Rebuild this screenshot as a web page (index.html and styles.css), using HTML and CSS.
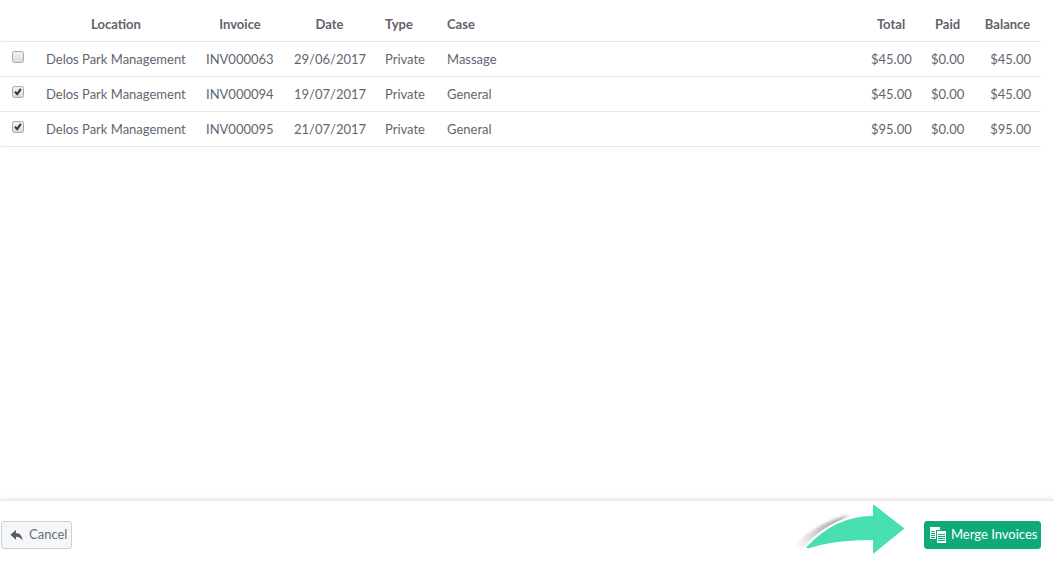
FILE: index.html
```html
<!DOCTYPE html>
<html lang="en">
<head>
<meta charset="utf-8">
<title>Merge Invoices</title>
<link rel="stylesheet" href="styles.css">
</head>
<body>
<div class="page">
  <main class="content">
    <table class="invoices">
      <colgroup>
        <col class="c-check"><col class="c-loc"><col class="c-inv"><col class="c-date"><col class="c-type"><col class="c-case"><col class="c-total"><col class="c-paid"><col class="c-bal">
      </colgroup>
      <thead>
        <tr>
          <th></th><th class="mid">Location</th><th class="mid">Invoice</th><th class="mid">Date</th><th>Type</th><th>Case</th><th class="mid">Total</th><th class="mid">Paid</th><th class="mid">Balance</th>
        </tr>
      </thead>
      <tbody>
        <tr>
          <td class="chk"><span class="box"></span></td><td>Delos Park Management</td><td>INV000063</td><td>29/06/2017</td><td>Private</td><td>Massage</td><td class="num">$45.00</td><td class="num">$0.00</td><td class="num">$45.00</td>
        </tr>
        <tr>
          <td class="chk"><span class="box"><svg class="tick" viewBox="0 0 12 12"><path d="M1.500 6.400l1.900-1.700 1.500 2 3.500-5.200 2 1.400-5.300 7.600z"/></svg></span></td><td>Delos Park Management</td><td>INV000094</td><td>19/07/2017</td><td>Private</td><td>General</td><td class="num">$45.00</td><td class="num">$0.00</td><td class="num">$45.00</td>
        </tr>
        <tr>
          <td class="chk"><span class="box"><svg class="tick" viewBox="0 0 12 12"><path d="M1.500 6.400l1.900-1.700 1.500 2 3.500-5.200 2 1.400-5.300 7.600z"/></svg></span></td><td>Delos Park Management</td><td>INV000095</td><td>21/07/2017</td><td>Private</td><td>General</td><td class="num">$95.00</td><td class="num">$0.00</td><td class="num">$95.00</td>
        </tr>
      </tbody>
    </table>
  </main>
  <footer class="footer">
    <button class="btn btn-cancel" type="button">
      <svg class="ico-reply" viewBox="0 0 14 14"><path d="M0.500 6.200L6.400 1.200v3.100c4 .1 6.600 2.500 7.100 8.500-1.500-3.400-3.600-4.500-7.100-4.500v3.200z"/></svg>
      <span class="btn-label">Cancel</span>
    </button>
    <svg class="arrow" viewBox="0 0 130 65" aria-hidden="true">
      <defs>
        <linearGradient id="sh" x1="0" y1="1" x2="1" y2="0">
          <stop offset="0" stop-color="#fff"/>
          <stop offset="0.5" stop-color="#c4c4c4"/>
          <stop offset="1" stop-color="#8f8f8f"/>
        </linearGradient>
        <filter id="bl"><feGaussianBlur stdDeviation="1.500"/></filter>
      </defs>
      <path d="M3 49C18 34 36 24 58 19 40 29 24 40 12 52z" fill="url(#sh)" filter="url(#bl)"/>
      <path d="M14 50C32 31 55 19 80 19V6L114 32.500 80 60V45C58 45 36 47 18 53 14 54 12 52 14 50z" fill="#48e0b0" stroke="#fff" stroke-width="2" stroke-linejoin="round"/>
    </svg>
    <button class="btn btn-merge" type="button">
      <svg class="ico-merge" viewBox="0 0 16 16"><path d="M0 0h10v3H6v9H0z" fill="#fff"/><path d="M1 4.500h4M1 6.500h4M1 8.500h4M1 10.500h4" stroke="#0fa97a"/><path d="M7 4h9v12H7z" fill="#fff"/><path d="M8 7.500h7M8 9.500h7M8 11.500h7M8 13.500h7" stroke="#0fa97a"/></svg>
      <span class="btn-label">Merge Invoices</span>
    </button>
  </footer>
</div>
</body>
</html>
```
FILE: styles.css
```css
* { box-sizing: border-box; }
html, body { margin: 0; height: 100%; }
body {
  font-family: Lato, "Open Sans", sans-serif;
  font-size: 13px;
  color: #5f6670;
  background: #fff;
}
.page { display: flex; flex-direction: column; height: 561px; overflow: hidden; }
.content { flex: 1; padding: 6px 13px 0 1px; }
.invoices { width: 1040px; border-collapse: collapse; table-layout: fixed; }
.c-check { width: 35px; }
.c-loc { width: 160px; }
.c-inv { width: 88px; }
.c-date { width: 91px; }
.c-type { width: 62px; }
.c-case { width: 424px; }
.c-total { width: 60px; }
.c-paid { width: 53px; }
.c-bal { width: 67px; }
.invoices th {
  height: 35px;
  padding: 2px 10px 0;
  font-weight: 700;
  font-size: 13px;
  color: #66616a;
  text-align: left;
  border-bottom: 1px solid #e7e7e7;
}
.invoices th.mid { text-align: center; }
.invoices td {
  height: 35px;
  padding: 0 10px;
  white-space: nowrap;
  border-bottom: 1px solid #e7e7e7;
}
.invoices td.num { text-align: right; }
.invoices td.chk { padding: 0 0 4px 11px; line-height: 0; }
.box {
  display: inline-block;
  width: 12px;
  height: 12px;
  border: 1px solid #a9a9a9;
  border-radius: 2.500px;
  background: linear-gradient(#f1f1f1, #dcdcdc);
  line-height: 0;
}
.tick { width: 10px; height: 10px; fill: #333; }
.footer {
  height: 62px;
  flex: none;
  position: relative;
  display: flex;
  align-items: flex-start;
  justify-content: space-between;
  padding: 20px 13px 0 1px;
  border-top: 2px solid #ececec;
  box-shadow: 0 -3px 4px -1px #f4f4f4;
}
.btn {
  height: 28px;
  display: inline-flex;
  align-items: center;
  font-family: inherit;
  font-size: 13px;
  white-space: nowrap;
  border-radius: 3px;
  padding: 0;
}
.btn-label { padding-bottom: 2px; }
.btn-cancel {
  width: 71px;
  padding-left: 8px;
  gap: 6px;
  color: #66707c;
  background: #f5f6f7;
  border: 1px solid #cfcfcf;
}
.ico-reply { width: 13px; height: 13px; fill: #525a62; }
.btn-merge {
  width: 117px;
  padding-left: 5px;
  gap: 5px;
  color: #fff;
  background: #0fa97a;
  border: 1px solid #0fa97a;
}
.ico-merge { width: 16px; height: 16px; flex: none; }
.arrow {
  position: absolute;
  left: 792px;
  top: -5px;
  width: 130px;
  height: 65px;
}
```
